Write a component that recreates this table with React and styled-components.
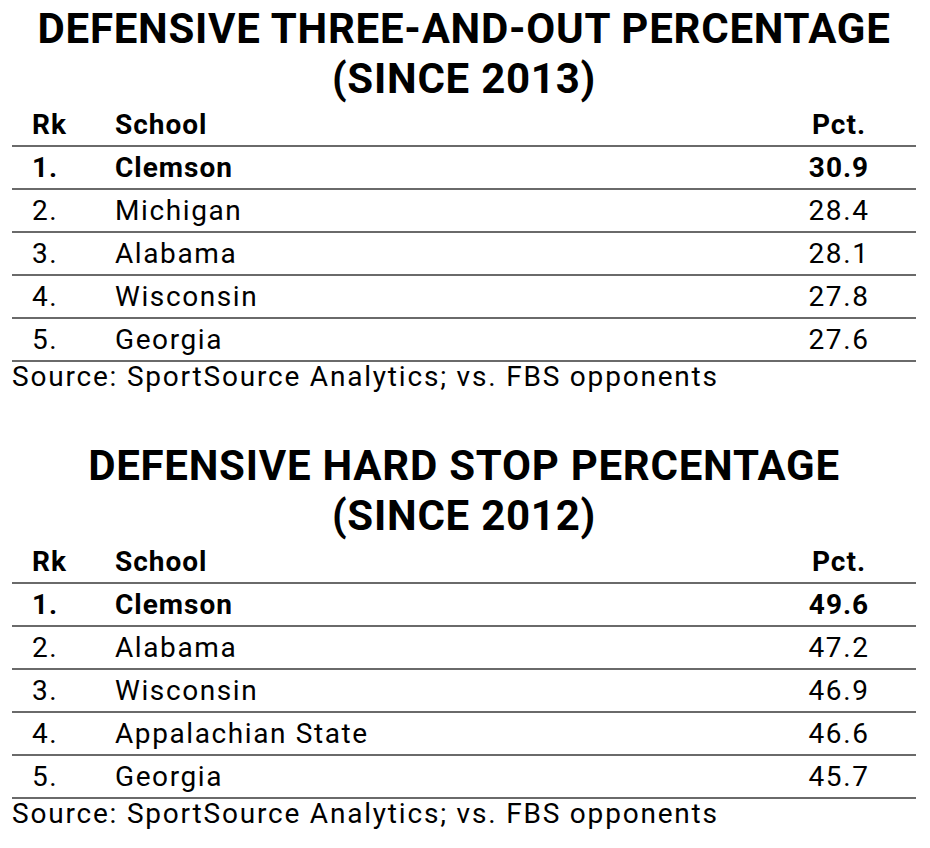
import React from "react";
import styled, { createGlobalStyle } from "styled-components";

const GlobalStyle = createGlobalStyle`
  body {
    margin: 0;
    background: #fff;
    font-family: Roboto, "Liberation Sans", sans-serif;
    color: #000;
  }
`;

const tables = [
  {
    title: ["DEFENSIVE THREE-AND-OUT PERCENTAGE", "(SINCE 2013)"],
    rows: [
      ["1.", "Clemson", "30.9"],
      ["2.", "Michigan", "28.4"],
      ["3.", "Alabama", "28.1"],
      ["4.", "Wisconsin", "27.8"],
      ["5.", "Georgia", "27.6"],
    ],
  },
  {
    title: ["DEFENSIVE HARD STOP PERCENTAGE", "(SINCE 2012)"],
    rows: [
      ["1.", "Clemson", "49.6"],
      ["2.", "Alabama", "47.2"],
      ["3.", "Wisconsin", "46.9"],
      ["4.", "Appalachian State", "46.6"],
      ["5.", "Georgia", "45.7"],
    ],
  },
];

const Page = styled.div`
  width: 930px;
  padding: 0 14px 0 12px;
  box-sizing: border-box;
`;

const Block = styled.section`
  padding-top: 4px;
  padding-bottom: 45px;
`;

const Title = styled.h1`
  margin: 0;
  font-size: 42px;
  line-height: 50px;
  font-weight: 700;
  text-align: center;
  letter-spacing: 0.75px;
`;

const Row = styled.div`
  display: grid;
  grid-template-columns: 103px 1fr 110px;
  height: 41px;
  border-bottom: 2px solid #6a6a6a;
  font-size: 28px;
  line-height: 42px;
  font-weight: ${(p) => (p.$bold ? 700 : 400)};
  letter-spacing: ${(p) => (p.$bold ? "1px" : "1.6px")};
`;

const Rank = styled.span`
  padding-left: 20px;
`;

const Pct = styled.span`
  text-align: center;
  margin-right: 44px;
`;

const Source = styled.p`
  margin: 0;
  font-size: 28px;
  line-height: 30px;
  letter-spacing: 1.8px;
`;

function StatTable({ title, rows }) {
  return (
    <Block>
      <Title>
        {title[0]}
        <br />
        {title[1]}
      </Title>
      <Row $bold>
        <Rank>Rk</Rank>
        <span>School</span>
        <Pct>Pct.</Pct>
      </Row>
      {rows.map(([rk, school, pct], i) => (
        <Row key={rk} $bold={i === 0}>
          <Rank>{rk}</Rank>
          <span>{school}</span>
          <Pct>{pct}</Pct>
        </Row>
      ))}
      <Source>Source: SportSource Analytics; vs. FBS opponents</Source>
    </Block>
  );
}

export default function App() {
  return (
    <>
      <GlobalStyle />
      <Page>
        {tables.map((t) => (
          <StatTable key={t.title[0]} {...t} />
        ))}
      </Page>
    </>
  );
}
